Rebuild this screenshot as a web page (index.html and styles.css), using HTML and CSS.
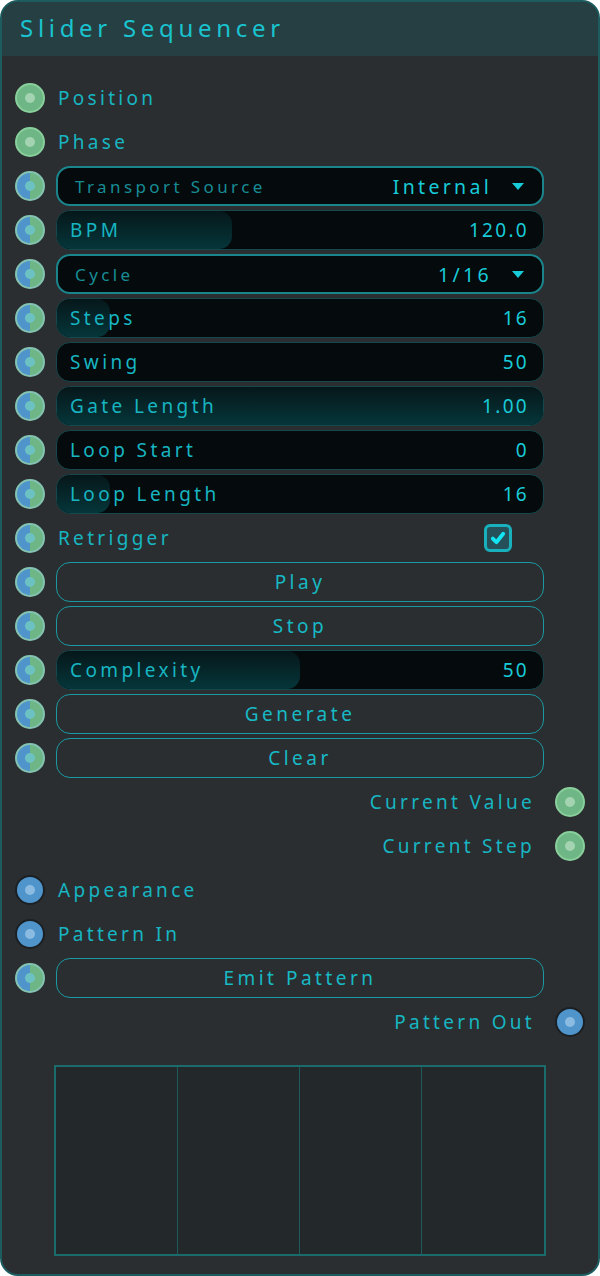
FILE: index.html
```html
<!DOCTYPE html>
<html lang="en">
<head>
  <meta charset="UTF-8">
  <title>Slider Sequencer</title>
  <link rel="stylesheet" href="styles.css">
</head>
<body>

  <div class="node">
    <div class="node-header">Slider Sequencer</div>

    <div class="node-body">
      <div class="row">
        <span class="port port-green"></span>
        <span class="label">Position</span>
      </div>
      <div class="row">
        <span class="port port-green"></span>
        <span class="label">Phase</span>
      </div>
      <div class="row">
        <span class="port port-mixed"></span>
        <div class="control select">
          <span class="select-label">Transport Source</span>
          <span class="select-value">Internal <span class="caret"></span></span>
        </div>
      </div>
      <div class="row">
        <span class="port port-mixed"></span>
        <div class="control slider">
          <div class="fill" style="width: 36%"></div>
          <span class="slider-label">BPM</span>
          <span class="slider-value">120.0</span>
        </div>
      </div>
      <div class="row">
        <span class="port port-mixed"></span>
        <div class="control select">
          <span class="select-label">Cycle</span>
          <span class="select-value">1/16 <span class="caret"></span></span>
        </div>
      </div>
      <div class="row">
        <span class="port port-mixed"></span>
        <div class="control slider">
          <div class="fill" style="width: 11%"></div>
          <span class="slider-label">Steps</span>
          <span class="slider-value">16</span>
        </div>
      </div>
      <div class="row">
        <span class="port port-mixed"></span>
        <div class="control slider">
          <div class="fill" style="width: 0%"></div>
          <span class="slider-label">Swing</span>
          <span class="slider-value">50</span>
        </div>
      </div>
      <div class="row">
        <span class="port port-mixed"></span>
        <div class="control slider">
          <div class="fill" style="width: 100%"></div>
          <span class="slider-label">Gate Length</span>
          <span class="slider-value">1.00</span>
        </div>
      </div>
      <div class="row">
        <span class="port port-mixed"></span>
        <div class="control slider">
          <div class="fill" style="width: 0%"></div>
          <span class="slider-label">Loop Start</span>
          <span class="slider-value">0</span>
        </div>
      </div>
      <div class="row">
        <span class="port port-mixed"></span>
        <div class="control slider">
          <div class="fill" style="width: 11%"></div>
          <span class="slider-label">Loop Length</span>
          <span class="slider-value">16</span>
        </div>
      </div>
      <div class="row">
        <span class="port port-mixed"></span>
        <span class="label">Retrigger</span>
        <span class="checkbox">
          <svg viewBox="0 0 16 16" width="16" height="16"><path d="M2.8 8.6 L6.4 12.2 L13.2 3.8" fill="none" stroke="#12e4f2" stroke-width="3.8" stroke-linecap="round" stroke-linejoin="round"/></svg>
        </span>
      </div>
      <div class="row">
        <span class="port port-mixed"></span>
        <div class="control button">Play</div>
      </div>
      <div class="row">
        <span class="port port-mixed"></span>
        <div class="control button">Stop</div>
      </div>
      <div class="row">
        <span class="port port-mixed"></span>
        <div class="control slider">
          <div class="fill" style="width: 50%"></div>
          <span class="slider-label">Complexity</span>
          <span class="slider-value">50</span>
        </div>
      </div>
      <div class="row">
        <span class="port port-mixed"></span>
        <div class="control button">Generate</div>
      </div>
      <div class="row">
        <span class="port port-mixed"></span>
        <div class="control button">Clear</div>
      </div>
      <div class="row row-out">
        <span class="label">Current Value</span>
        <span class="port port-green"></span>
      </div>
      <div class="row row-out">
        <span class="label">Current Step</span>
        <span class="port port-green"></span>
      </div>
      <div class="row">
        <span class="port port-blue"></span>
        <span class="label">Appearance</span>
      </div>
      <div class="row">
        <span class="port port-blue"></span>
        <span class="label">Pattern In</span>
      </div>
      <div class="row">
        <span class="port port-mixed"></span>
        <div class="control button">Emit Pattern</div>
      </div>
      <div class="row row-out">
        <span class="label">Pattern Out</span>
        <span class="port port-blue"></span>
      </div>

      <div class="pattern-grid">
        <div class="cell"></div>
        <div class="cell"></div>
        <div class="cell"></div>
        <div class="cell"></div>
      </div>
    </div>
  </div>

</body>
</html>
```

FILE: styles.css
```css
* {
  box-sizing: border-box;
  margin: 0;
  padding: 0;
}

body {
  width: 600px;
  height: 1276px;
  background-color: #ffffff;
  font-family: "Noto Sans", "DejaVu Sans", sans-serif;
}

.node {
  width: 600px;
  height: 1276px;
  background-color: #2a2e30;
  border: 2px solid #1d5c5e;
  border-radius: 18px;
  overflow: hidden;
}

.node-header {
  height: 54px;
  background-color: #263f42;
  color: #19c3cf;
  font-size: 24px;
  letter-spacing: 4.7px;
  padding: 9px 0 0 18px;
}

.node-body {
  padding: 20px 0 0 0;
}

.row {
  display: flex;
  align-items: center;
  height: 44px;
  padding: 0 54px 0 13px;
  gap: 11px;
}

.row .label {
  padding-left: 2px;
}

.row-out {
  justify-content: flex-end;
  padding: 0 13px 0 0;
  gap: 20px;
}

.label {
  color: #17b5c1;
  font-size: 19px;
  letter-spacing: 3.3px;
  flex: 1;
}

.row-out .label {
  flex: none;
}

/* ports */
.port {
  width: 30px;
  height: 30px;
  border-radius: 50%;
  flex: none;
  position: relative;
  border: 2px solid #89cf9c;
  background-color: #6eb686;
}

.port::after {
  content: "";
  position: absolute;
  left: 8px;
  top: 8px;
  width: 10px;
  height: 10px;
  border-radius: 50%;
  background-color: #a3d3b1;
}

.port-blue {
  border-color: #1b2024;
  background-color: #4f95cc;
}

.port-blue::after {
  background-color: #8bbbe0;
}

.port-mixed {
  border-color: #84c3b2;
  background: linear-gradient(90deg, #4f95cc 50%, #6eb686 50%);
}

.port-mixed::after {
  background-color: #6cc2c2;
}

/* controls */
.control {
  flex: 1;
  height: 40px;
  border-radius: 14px;
  position: relative;
  overflow: hidden;
  display: flex;
  align-items: center;
  justify-content: space-between;
}

.select {
  background-color: #050a0c;
  border: 2px solid #1a858c;
  padding: 0 18px 0 17px;
}

.select-label {
  color: #178c95;
  font-size: 17px;
  letter-spacing: 3.4px;
}

.select-value {
  color: #18cbd8;
  font-size: 19.5px;
  letter-spacing: 3.3px;
  display: flex;
  align-items: center;
}

.caret {
  width: 0;
  height: 0;
  border-left: 6.5px solid transparent;
  border-right: 6.5px solid transparent;
  border-top: 7px solid #18cbd8;
  margin-left: 20px;
}

.slider {
  background-color: #050a0c;
  border: 1px solid #15474c;
  padding: 0 14px 0 13px;
}

.slider .fill {
  position: absolute;
  left: 0;
  top: 0;
  bottom: 0;
  border-radius: 13px;
  background: linear-gradient(180deg, #06171a 0%, #05363a 100%);
}

.slider-label {
  position: relative;
  color: #17b5c1;
  font-size: 19px;
  letter-spacing: 3.4px;
}

.slider-value {
  position: relative;
  color: #18cbd8;
  font-size: 19px;
  letter-spacing: 2.3px;
}

.button {
  border: 1px solid #1a99a2;
  justify-content: center;
  color: #17b9c5;
  font-size: 19px;
  letter-spacing: 3.5px;
}

.checkbox {
  width: 28px;
  height: 28px;
  border: 3px solid #19b0bd;
  border-radius: 6px;
  background-color: #25505a;
  display: flex;
  align-items: center;
  justify-content: center;
  margin-right: 32px;
}

/* pattern preview */
.pattern-grid {
  margin: 21px 0 0 52px;
  width: 492px;
  height: 191px;
  border: 2px solid #1b6a6c;
  background-color: #23282b;
  display: grid;
  grid-template-columns: repeat(4, 1fr);
}

.cell {
  border-right: 1px solid #1d5a5b;
}

.cell:last-child {
  border-right: none;
}
```
